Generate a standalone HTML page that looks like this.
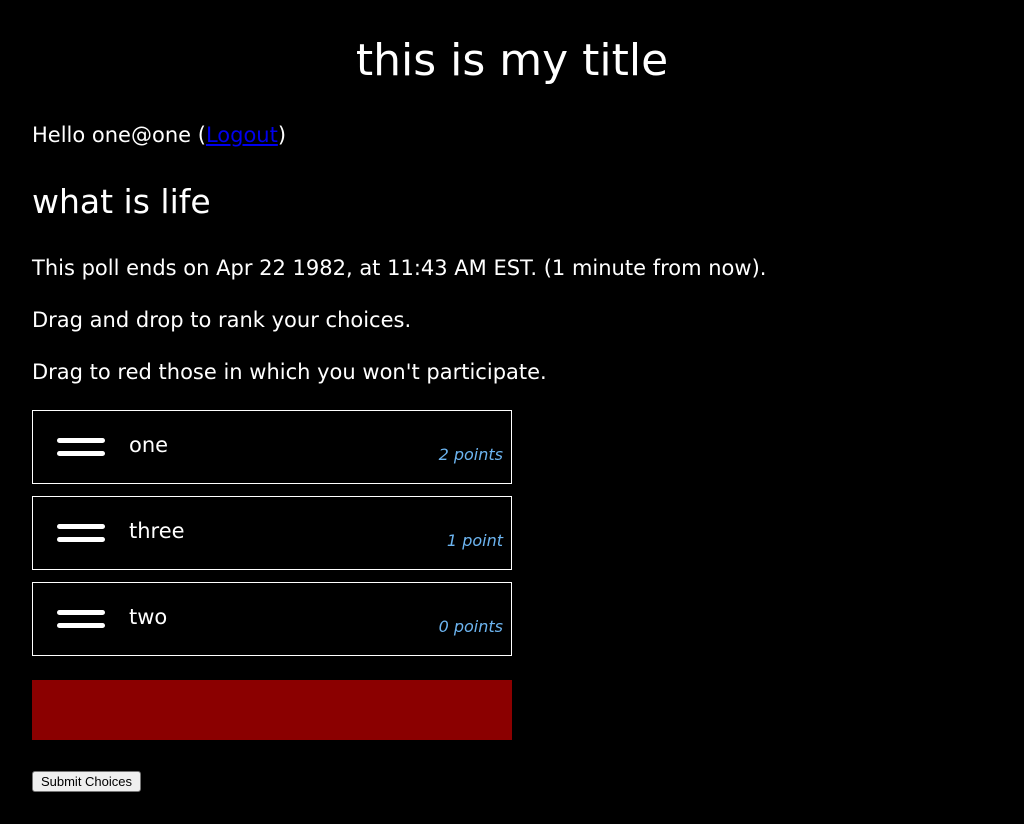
<!DOCTYPE html>
<html><head><style>
body{margin:0;background:#000;width:1024px;height:824px;overflow:hidden;color:#fff;font-family:"DejaVu Sans","Liberation Sans",sans-serif;position:relative}
.a{position:absolute;white-space:nowrap}
h1{position:absolute;top:31px;left:0;width:1024px;text-align:center;margin:0;font-size:44px;font-weight:normal;line-height:60px}
.t{font-size:21px;line-height:30px}
a{color:#00e}
.box{position:absolute;left:32px;width:478px;height:72px;border:1px solid #fff}
.bar{position:absolute;left:24px;width:48px;height:5px;background:#fff;border-radius:3px}
.lbl{position:absolute;left:96px;top:22px;font-size:21px}
.pts{position:absolute;right:8px;top:34px;font-size:16px;font-style:italic;color:#6cb4f0}
</style></head><body>
<h1>this is my title</h1>
<div class="a t" style="left:32px;top:120px">Hello one@one (<a href="#">Logout</a>)</div>
<div class="a" style="left:32px;top:181px;font-size:33px;line-height:42px">what is life</div>
<div class="a t" style="left:32px;top:253px">This poll ends on Apr 22 1982, at 11:43 AM EST. (1 minute from now).</div>
<div class="a t" style="left:32px;top:305px">Drag and drop to rank your choices.</div>
<div class="a t" style="left:32px;top:357px">Drag to red those in which you won't participate.</div>
<div class="box" style="top:410px"><div class="bar" style="top:27px"></div><div class="bar" style="top:40px"></div><div class="lbl">one</div><div class="pts">2 points</div></div>
<div class="box" style="top:496px"><div class="bar" style="top:27px"></div><div class="bar" style="top:40px"></div><div class="lbl">three</div><div class="pts">1 point</div></div>
<div class="box" style="top:582px"><div class="bar" style="top:27px"></div><div class="bar" style="top:40px"></div><div class="lbl">two</div><div class="pts">0 points</div></div>
<div class="a" style="left:32px;top:680px;width:480px;height:60px;background:#8b0000"></div>
<div class="a" style="left:32px;top:771px;width:107px;height:19px;background:#efefef;border:1px solid #767676;border-radius:3px;color:#000;font-size:13px;line-height:19px;text-align:center;font-family:'Liberation Sans',sans-serif">Submit Choices</div>
</body></html>
